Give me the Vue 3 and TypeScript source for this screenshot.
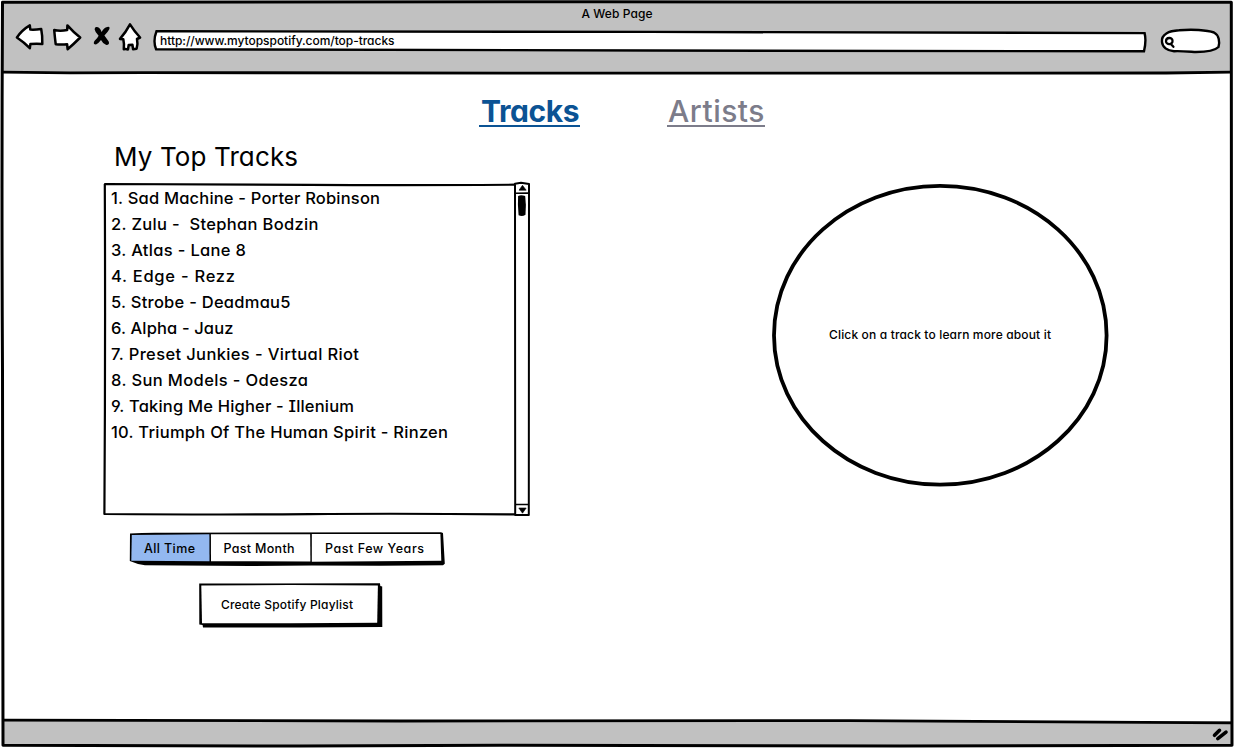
<script setup lang="ts">
import { ref } from 'vue'

interface Track {
  title: string
  width: number
}

interface Range {
  id: string
  label: string
  width: number
}

const tracks: Track[] = [
  { title: '1. Sad Machine - Porter Robinson', width: 269 },
  { title: '2. Zulu -  Stephan Bodzin', width: 207.5 },
  { title: '3. Atlas - Lane 8', width: 135 },
  { title: '4. Edge - Rezz', width: 124 },
  { title: '5. Strobe - Deadmau5', width: 179.5 },
  { title: '6. Alpha - Jauz', width: 122.5 },
  { title: '7. Preset Junkies - Virtual Riot', width: 248 },
  { title: '8. Sun Models - Odesza', width: 197 },
  { title: '9. Taking Me Higher - Illenium', width: 243 },
  { title: '10. Triumph Of The Human Spirit - Rinzen', width: 337 },
]

const ranges: Range[] = [
  { id: 'all', label: 'All Time', width: 51 },
  { id: 'month', label: 'Past Month', width: 71 },
  { id: 'years', label: 'Past Few Years', width: 99 },
]

const activeRange = ref('all')

// Spreads the letters of a label so that it fills the given width.
const vFit = {
  mounted(el: HTMLElement, binding: { value: number }) {
    const count = (el.textContent ?? '').length
    const natural = el.getBoundingClientRect().width
    const spacing = (binding.value - natural) / Math.max(1, count - 1)
    el.style.letterSpacing = `${spacing.toFixed(3)}px`
    el.style.marginRight = `${(-spacing).toFixed(3)}px`
  },
}
</script>

<template>
  <div class="window">
    <header class="chrome">
      <div class="title"><span v-fit="71" class="t">A Web Page</span></div>
      <div class="toolbar">
        <svg class="nav" width="142" height="40" viewBox="8 18 142 40">
          <g fill="#fff" stroke="#000" stroke-width="2.5" stroke-linejoin="round" stroke-linecap="round">
            <path d="M16.9 37.5Q22 30 29.8 25.4L30.3 29.6Q35 30 41.2 28.9Q42.6 36 42.3 44Q36 43.4 30.4 44.1L29.8 48.2Q24 42.2 16.9 37.5Z" />
            <path d="M54.2 30Q60 31.3 67.2 30L67.4 25.4Q73.5 32.3 80.2 37.5Q73.8 44 67.6 49.2L67.1 44.2Q61 44.6 55.7 44.2Q54.8 37 54.2 30Z" />
            <path d="M130 24.4Q134.4 31.5 140.1 37.5L137 39Q138.1 44 136.6 48.7L133.1 49.2L132.4 44.7L128.7 45L128 49.4Q125.5 48.9 123.8 49.3Q124.4 44 123.3 39.3L120 38.9Q126 32 130 24.4Z" />
          </g>
          <path d="M96 27Q99.8 26.6 101.6 32Q104 27.4 107.2 27Q110.3 26.2 109.3 29.3Q107.8 32.2 104.4 35.6Q107 39.3 108.7 41.4Q110 44.8 106.3 45Q103 44 101 40Q98.5 43.3 96 44.6Q92.6 44.5 94.4 41Q97.4 38.6 98.6 35.8Q95 32 94.6 29.2Q94.8 27.6 96 27Z" />
        </svg>
        <div class="address">
          <svg class="art" width="996" height="24" viewBox="152 29 996 24">
            <path d="M156.5 31.3Q400 31.8 650 31.9T1144.6 33.1Q1146.5 41 1144 51.3Q900 50.8 650 50.5T156.1 49.3Q152.7 41 156.5 31.3Z" fill="#fff" stroke="#000" stroke-width="2.4" />
          </svg>
          <span v-fit="234.5" class="t">http://www.mytopspotify.com/top-tracks</span>
        </div>
        <svg class="search" width="62" height="28" viewBox="1160 27 62 28">
          <path d="M1163 42C1162 34 1170 31 1180 30.3C1193 29 1208 30 1215 32.5C1220 35 1221 42 1219.5 47C1216 50.5 1206 52 1197 52C1189 51.5 1180 50.7 1175 51.2C1168 51 1163.5 47 1163 42Z" fill="#fff" stroke="#000" stroke-width="2.4" />
          <path d="M1173.5 40.8C1174 44.8 1167 45.3 1167 41.2C1167 37.2 1173.5 36.8 1173.5 40.8ZM1171.7 43.8L1174.4 46.8" fill="none" stroke="#000" stroke-width="2.3" stroke-linecap="round" />
        </svg>
      </div>
    </header>

    <main class="page">
      <nav class="tabs">
        <a class="tab current"><span v-fit="98.5" class="t">Tracks</span></a>
        <a class="tab"><span v-fit="96.5" class="t">Artists</span></a>
      </nav>
      <div class="columns">
        <section class="left">
          <h1><span v-fit="184" class="t">My Top Tracks</span></h1>
          <div class="list">
            <svg class="art" width="430" height="336" viewBox="102 181 430 336">
              <g fill="none" stroke="#000" stroke-width="2.2" stroke-linejoin="round">
                <path d="M104.2 184Q220 184.2 310 184.8T515 184.7M104.8 184Q105.5 350 104.4 514Q220 514.9 310 514.1T516 514.4" />
                <path d="M515 183.7Q515.8 350 515.2 515L528.8 515Q528.2 350 529 184L521 182.8Z" stroke-width="2" />
                <path d="M515 193.2L529 193.1M515.5 504.5L529 504.5" stroke-width="1.6" />
              </g>
              <path d="M519 190.2L522.5 185.3L526.2 190.2ZM518.8 508L526.2 508L522.5 513.2Z" stroke="#000" stroke-width=".6" />
              <path d="M518.1 196Q521 194.6 525.2 196Q526.4 205 525.5 214.8Q522 217 518.6 215.2Q517.5 205 518.1 196Z" />
            </svg>
            <ol>
              <li v-for="track in tracks" :key="track.title"><span v-fit="track.width" class="t">{{ track.title }}</span></li>
            </ol>
          </div>
          <div class="ranges">
            <svg class="art" width="318" height="36" viewBox="128 531 318 36">
              <path d="M130 533.6Q145 532.4 165 532.8L441 532.2L443 533L444.8 563.7L443 565.2L380 565.7L312 565.4L250 566L145 565.2L138 564.1L129.8 561Z" />
              <path d="M131.8 534.9L209.4 534.2L209.5 561.2L131.3 560.8Z" fill="#93b8f0" />
              <path d="M210.9 534.2L310.2 534.2L310.4 561.4L211 561.2Z" fill="#fff" />
              <path d="M311.8 534L440.4 534.1L441.3 560.8L311.8 561.8Z" fill="#fff" />
            </svg>
            <button
              v-for="range in ranges"
              :key="range.id"
              :class="['range', range.id]"
              :aria-pressed="activeRange === range.id"
              @click="activeRange = range.id"
            ><span v-fit="range.width" class="t">{{ range.label }}</span></button>
          </div>
          <button class="create">
            <svg class="art" width="186" height="46" viewBox="198 582 186 46">
              <path d="M199.2 583.6L380 583.3L380.3 586L382.2 586.4L382.3 627L300 627.4L203 627.5L202.6 625L199.3 624.6Z" />
              <path d="M201.3 585.5L290 585L377.9 585.5L377.2 622.8L290 623.3L202 623.2Z" fill="#fff" />
            </svg>
            <span v-fit="132" class="t">Create Spotify Playlist</span>
          </button>
        </section>
        <section class="detail">
          <svg class="art" width="340" height="306" viewBox="770 182 340 306">
            <path d="M940 185.8C1032 185.8 1106.6 252 1106.6 335.5C1106.6 418 1032 484.7 940 484.7C849 484.7 774 418 774 335.5C774 252 849 185.8 940 185.8Z" fill="#fff" stroke="#000" stroke-width="3.8" />
          </svg>
          <span v-fit="222" class="t">Click on a track to learn more about it</span>
        </section>
      </div>
    </main>

    <footer class="status">
      <svg width="20" height="18" viewBox="1210 727 20 18">
        <path d="M1214.5 736.3L1219.5 731.3M1217.8 739.6L1226 733.2" stroke="#000" stroke-width="3.6" stroke-linecap="round" />
      </svg>
    </footer>

    <svg class="frame" width="1234" height="748" viewBox="0 0 1234 748">
      <g fill="none" stroke="#000" stroke-width="3" stroke-linejoin="round">
        <path d="M2.5 2.2L600 1.8L1231.3 2.3Q1230.6 180 1231.5 370T1232 745.2L900 746L500 745.2L300 746L3 745.3Q3.5 550 2.5 370T2.5 2.2Z" />
        <path d="M3 72.2L70 72.9L145 72.6L600 73.2L1166 73L1231 72.2M3 720.2L400 721L850 720.6L1231 722.8" stroke-width="2.8" />
      </g>
    </svg>
  </div>
</template>

<style>
body {
  margin: 0;
  background: #fff;
}
</style>

<style scoped>
.window {
  position: relative;
  display: flex;
  flex-direction: column;
  width: 1234px;
  height: 748px;
  overflow: hidden;
  box-sizing: border-box;
  padding: 2px 2px 2px 3px;
  background: #fff;
  color: #000;
  font: 500 12.5px/16px Inter, "Open Sans", sans-serif;
  font-feature-settings: "cv11", "cv08", "ss03", "cv04";
}
.t {
  display: inline-block;
  position: relative;
  white-space: pre;
}
svg {
  display: block;
}
.art {
  position: absolute;
  left: -2px;
  top: -2px;
}
.frame {
  position: absolute;
  left: 0;
  top: 0;
  pointer-events: none;
}
.chrome {
  flex: 0 0 71px;
  background: #c1c1c1;
}
.title {
  height: 16px;
  padding: 4px 1px 0 0;
  text-align: center;
  font-size: 12px;
}
.toolbar {
  display: flex;
  align-items: flex-start;
}
.nav {
  flex: none;
  margin: -4px 0 0 5px;
}
.address {
  position: relative;
  flex: none;
  width: 986px;
  height: 20px;
  margin: 9px 0 0 4px;
  padding-left: 6px;
  box-sizing: border-box;
  font-size: 12px;
  line-height: 20px;
}
.search {
  margin: 5px 0 0 19px;
}
.page {
  flex: 1;
}
.tabs {
  display: flex;
  gap: 87px;
  padding: 18px 0 0 476px;
}
.tab {
  width: 97px;
  height: 34px;
  padding-left: 1px;
  border-bottom: 2px solid #7c7c8a;
  color: #7c7c8a;
  font-size: 30px;
  line-height: 40px;
}
.current {
  width: 99px;
  padding-left: 2px;
  border-color: #0b5394;
  color: #0b5394;
  font-weight: 700;
}
.columns {
  display: flex;
  gap: 241px;
  padding-left: 101px;
}
.left {
  width: 427px;
}
h1 {
  height: 56px;
  margin: 0;
  padding-left: 10px;
  font-size: 26px;
  font-weight: 400;
  line-height: 60px;
}
.list {
  position: relative;
  height: 332px;
}
ol {
  list-style: none;
  margin: 0;
  padding: 2px 0 0 7px;
  font-size: 16.5px;
  line-height: 26px;
}
li {
  height: 26px;
}
button {
  padding: 0;
  border: 0;
  background: none;
  color: inherit;
  font: inherit;
  font-feature-settings: inherit;
}
.ranges {
  position: relative;
  display: flex;
  width: 314px;
  height: 32px;
  margin: 18px 0 0 26px;
}
.range {
  width: 100px;
}
.range.all {
  width: 79px;
}
.range.years {
  width: 131px;
}
.create {
  position: relative;
  display: block;
  width: 178px;
  height: 42px;
  margin: 19px 0 0 96px;
  padding-right: 4px;
  font-size: 12px;
}
.detail {
  position: relative;
  display: flex;
  align-items: center;
  justify-content: center;
  width: 336px;
  height: 302px;
  margin-top: 57px;
  font-size: 12px;
}
.status {
  display: flex;
  flex: 0 0 25px;
  justify-content: flex-end;
  align-items: center;
  padding: 2px 2px 0 0;
  box-sizing: border-box;
  background: #c1c1c1;
}
</style>
